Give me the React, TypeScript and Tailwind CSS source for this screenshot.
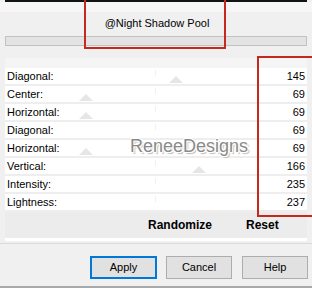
import React from "react";

const rows: [string, string][] = [
  ["Diagonal:", "145"],
  ["Center:", "69"],
  ["Horizontal:", "69"],
  ["Diagonal:", "69"],
  ["Horizontal:", "69"],
  ["Vertical:", "166"],
  ["Intensity:", "235"],
  ["Lightness:", "237"],
];

const thumbs: { x: number; y: number }[] = [
  { x: 176, y: 76 },
  { x: 86, y: 94 },
  { x: 86, y: 112 },
  { x: 86, y: 148 },
  { x: 199, y: 166 },
];

function Thumb({ x, y }: { x: number; y: number }) {
  return (
    <svg
      className="absolute pointer-events-none"
      style={{ left: x - 7, top: y }}
      width="14"
      height="7"
      viewBox="0 0 14 7"
    >
      <polygon points="7,0 14,7 0,7" fill="#e6e6e6" />
    </svg>
  );
}

export default function App() {
  return (
    <div
      className="relative w-[312px] h-[288px] overflow-hidden bg-[#f0f0f0] flex flex-col text-[11px] text-black"
      style={{ fontFamily: '"Liberation Sans", Arial, sans-serif' }}
    >
      <div className="h-[2px] mx-[5px] bg-[#0f1416]" />
      <div className="h-[34px] flex justify-center pt-[15px] leading-[13px] bg-[linear-gradient(#f6f6f6_0,#f6f6f6_10px,#f0f0f0_10px)]">
        <span className="pl-[2px]">@Night Shadow Pool</span>
      </div>
      <div className="mx-[5px] h-[10px] border border-[#c2c2c2] bg-[#e3e3e3]" />
      <div className="h-[12px]" />
      <div className="mx-[5px] bg-white flex flex-col">
        <div className="h-[10px] bg-[#f5f5f5]" />
        {rows.map(([label, value], i) => (
          <div
            key={i}
            className="relative h-[18px] flex items-center justify-between pl-[2px] pr-[2px] border-b-2 border-[#eeeeee] leading-[13px]"
          >
            <span>{label}</span>
            <span className="absolute left-[150px] top-[2px] w-px h-[6px] bg-[#f0f0f0]" />
            <span>{value}</span>
          </div>
        ))}
        <div className="h-[26px] bg-[#ececec] flex items-center font-bold text-[12px]">
          <span className="ml-[143px] w-[98px]">Randomize</span>
          <span>Reset</span>
        </div>
        <div className="h-[3px] bg-white" />
      </div>
      <div className="h-[2px]" />
      <div className="h-px bg-[#dadada]" />
      <div className="h-[12px]" />
      <div className="h-[23px] flex">
        <div className="ml-[90px] w-[67px] h-[23px] border-2 border-[#0078d7] bg-[#e1e1e1] flex items-center justify-center">
          Apply
        </div>
        <div className="ml-[9px] w-[66px] h-[23px] border border-[#adadad] bg-[#e1e1e1] flex items-center justify-center">
          Cancel
        </div>
        <div className="ml-[10px] w-[66px] h-[23px] border border-[#adadad] bg-[#e1e1e1] flex items-center justify-center">
          Help
        </div>
      </div>
      <div className="flex-1" />
      <div className="h-[2px] bg-[#a9a9a9]" />

      {thumbs.map((t, i) => (
        <Thumb key={i} x={t.x} y={t.y} />
      ))}

      <div
        className="absolute left-[130px] top-[136px] text-[18px] leading-[20px] text-[#8a8a8a] pointer-events-none"
        style={{ textShadow: "1px 1px 0 #fff, -1px -1px 0 #fff, 1px -1px 0 #fff, -1px 1px 0 #fff, 2px 2px 1px #bbb" }}
      >
        ReneeDesigns
      </div>

      <div className="absolute left-[84px] top-[-5px] w-[142px] h-[54px] border-2 border-[#c5281c] pointer-events-none" />
      <div className="absolute left-[257px] top-[56px] w-[70px] h-[161px] border-2 border-[#c5281c] pointer-events-none" />
    </div>
  );
}
